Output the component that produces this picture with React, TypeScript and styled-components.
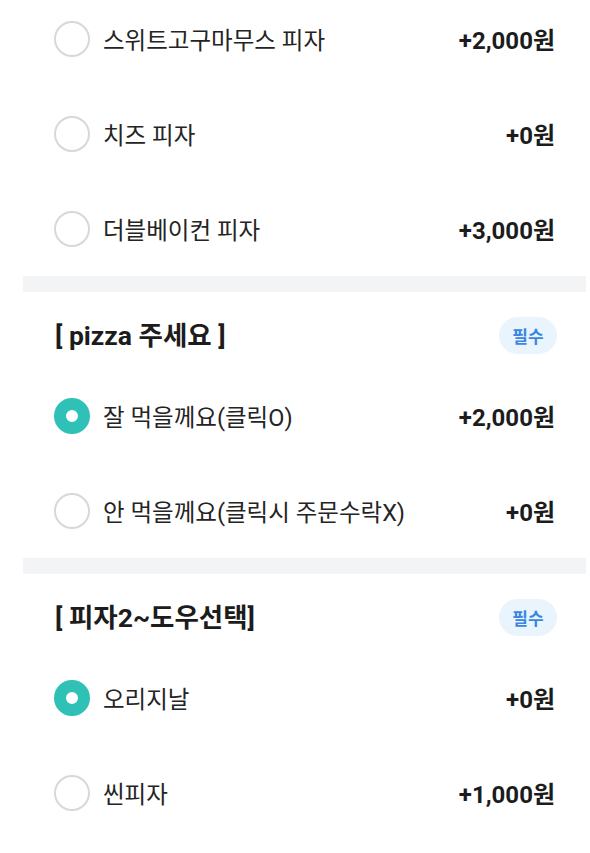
import styled, { createGlobalStyle } from 'styled-components'

const GlobalStyle = createGlobalStyle`
  html, body {
    margin: 0;
    padding: 0;
    background: #ffffff;
  }
  body {
    font-family: Roboto, "Noto Sans CJK KR", "Noto Sans", sans-serif;
    color: #222222;
    overflow: hidden;
  }
`

type Option = { label: string; price: string; checked?: boolean }
type Group = { title?: string; required?: boolean; options: Option[] }

const groups: Group[] = [
  {
    options: [
      { label: '스위트고구마무스 피자', price: '+2,000원' },
      { label: '치즈 피자', price: '+0원' },
      { label: '더블베이컨 피자', price: '+3,000원' },
    ],
  },
  {
    title: '[ pizza 주세요 ]',
    required: true,
    options: [
      { label: '잘 먹을께요(클릭O)', price: '+2,000원', checked: true },
      { label: '안 먹을께요(클릭시 주문수락X)', price: '+0원' },
    ],
  },
  {
    title: '[ 피자2~도우선택]',
    required: true,
    options: [
      { label: '오리지날', price: '+0원', checked: true },
      { label: '씬피자', price: '+1,000원' },
    ],
  },
]

function App() {
  return (
    <>
      <GlobalStyle />
      <Page>
        {groups.map((group, i) => (
          <div key={i}>
            {i > 0 && <Divider />}
            <Section>
              {group.title && (
                <SectionHeader>
                  <SectionTitle>{group.title}</SectionTitle>
                  {group.required && <Badge>필수</Badge>}
                </SectionHeader>
              )}
              {group.options.map((opt) => (
                <OptionRow key={opt.label}>
                  <Radio checked={!!opt.checked} />
                  <OptionLabel>{opt.label}</OptionLabel>
                  <Price>{opt.price}</Price>
                </OptionRow>
              ))}
            </Section>
          </div>
        ))}
      </Page>
    </>
  )
}

const Page = styled.div`
  margin: -9px 4px 0 23px;
  display: flex;
  flex-direction: column;
`

const Divider = styled.div`
  height: 16px;
  background-color: #f3f4f6;
`

const Section = styled.section`
  display: flex;
  flex-direction: column;
  padding: 0 31px 0 31px;
`

const SectionHeader = styled.div`
  display: flex;
  align-items: center;
  justify-content: space-between;
  height: 37px;
  padding: 25px 0 14px 1px;
`

const SectionTitle = styled.h2`
  margin: 0;
  font-size: 26.5px;
  line-height: 37px;
  font-weight: 700;
  color: #1c1c1c;
`

const Badge = styled.span`
  display: inline-flex;
  align-items: center;
  justify-content: center;
  width: 58px;
  height: 37px;
  margin-right: -2px;
  border-radius: 19px;
  background-color: #eaf4fd;
  color: #3a86e0;
  font-size: 17px;
  font-weight: 700;
`

const OptionRow = styled.div`
  display: flex;
  align-items: center;
  height: 95px;
`

const Radio = styled.span<{ checked: boolean }>`
  flex: none;
  box-sizing: border-box;
  width: 36px;
  height: 36px;
  border-radius: 50%;
  background: #ffffff;
  border: ${({ checked }) => (checked ? '12px solid #2fc1b5' : '2.5px solid #d8d8d8')};
`

const OptionLabel = styled.span`
  flex: 1;
  margin-left: 13px;
  font-size: 23.5px;
  color: #242424;
`

const Price = styled.span`
  font-size: 24px;
  font-weight: 700;
  color: #1c1c1c;
`

export default App
